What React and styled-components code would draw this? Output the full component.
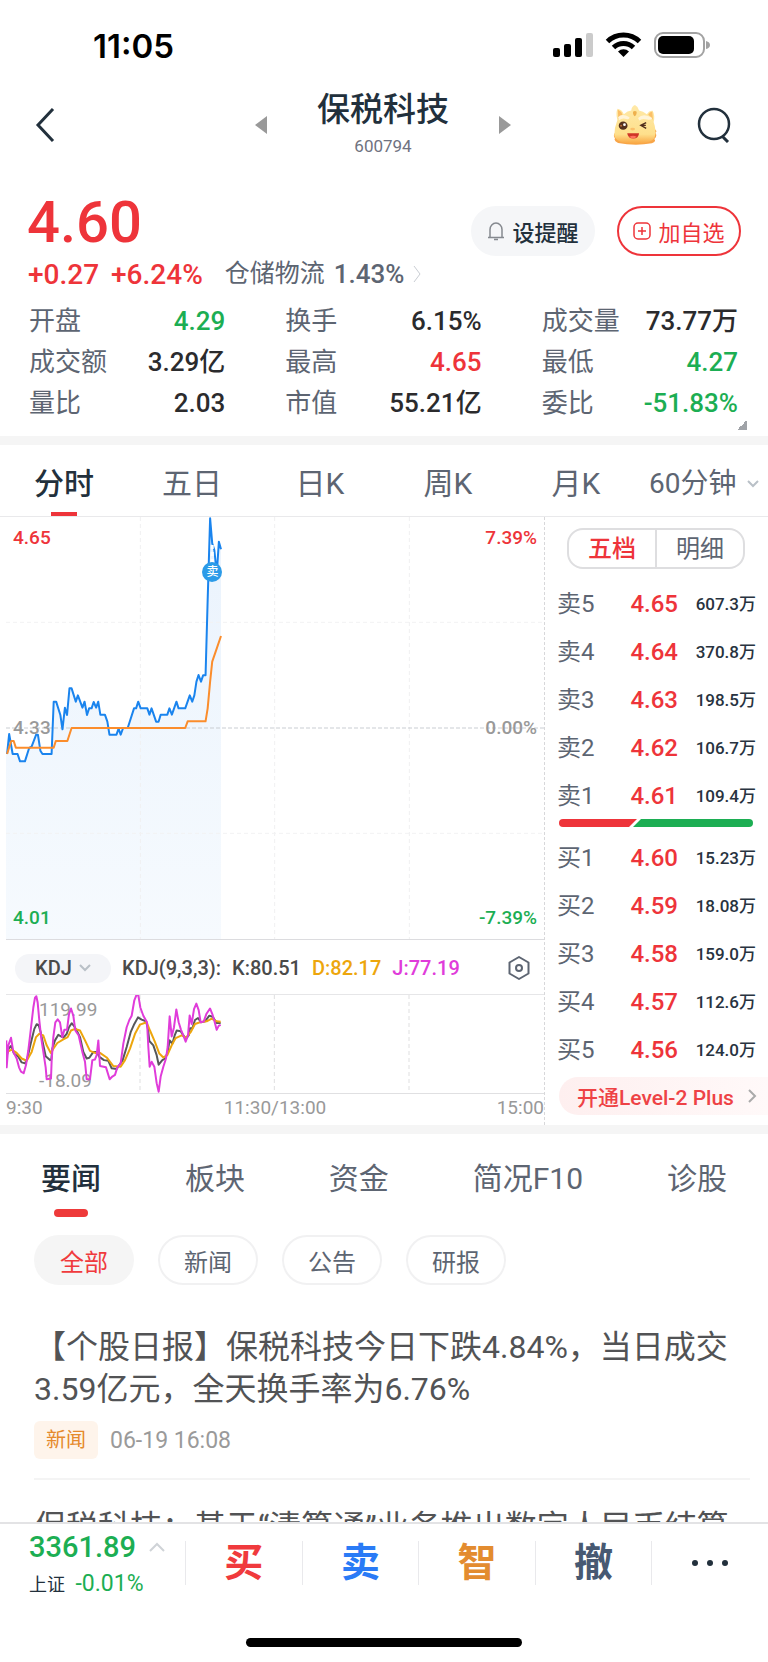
import { useState } from 'react'
import styled, { createGlobalStyle } from 'styled-components'

const RED = '#ee343a'
const GREEN = '#1cae53'
const INK = '#22303c'
const SLATE = '#5d6572'

const stats = [
    { label: '开盘', value: '4.29', color: GREEN },
    { label: '换手', value: '6.15%' },
    { label: '成交量', value: '73.77万' },
    { label: '成交额', value: '3.29亿' },
    { label: '最高', value: '4.65', color: RED },
    { label: '最低', value: '4.27', color: GREEN },
    { label: '量比', value: '2.03' },
    { label: '市值', value: '55.21亿' },
    { label: '委比', value: '-51.83%', color: GREEN },
]

const periods = ['分时', '五日', '日K', '周K', '月K']
const sections = ['要闻', '板块', '资金', '简况F10', '诊股']
const filters = ['全部', '新闻', '公告', '研报']

const asks = [
    ['卖5', '4.65', '607.3万'],
    ['卖4', '4.64', '370.8万'],
    ['卖3', '4.63', '198.5万'],
    ['卖2', '4.62', '106.7万'],
    ['卖1', '4.61', '109.4万'],
]
const bids = [
    ['买1', '4.60', '15.23万'],
    ['买2', '4.59', '18.08万'],
    ['买3', '4.58', '159.0万'],
    ['买4', '4.57', '112.6万'],
    ['买5', '4.56', '124.0万'],
]

const actions = [
    { label: '买', color: '#f03a3d' },
    { label: '卖', color: '#2a7bf6' },
    { label: '智', color: '#e38c2f' },
    { label: '撤', color: '#475972' },
]

const pricePoints = '20,942 26,882 36,942 50,942 57,964 71,964 83,924 90,920 103,884 108,884 115,932 121,942 147,942 153,785 160,785 172,825 178,868 185,803 191,825 198,745 204,745 216,785 222,766 235,803 241,785 248,825 254,805 261,805 267,786 274,803 280,785 286,824 299,824 306,845 312,884 332,884 338,866 344,884 351,864 364,864 382,805 388,805 394,785 401,805 420,805 426,824 432,805 445,845 452,845 458,824 477,824 483,805 490,824 503,785 509,805 528,805 541,766 548,785 554,766 560,725 566,705 573,725 579,706 586,706 592,480 599,235 605,310 611,330 618,400 624,305 630,328'
const averagePoints = '20,942 32,903 39,903 45,923 153,923 159,903 192,903 204,864 528,864 535,844 586,844 592,805 599,725 605,665 618,625 630,588'

const jPoints = '19,180 20,262 25,195 33,172 40,215 50,235 57,262 63,275 71,280 78,255 85,210 92,150 100,80 105,50 109,46 113,65 118,120 124,175 130,215 137,262 140,298 153,296 155,240 160,170 166,125 173,116 180,125 187,170 193,148 201,148 207,100 213,83 220,105 226,150 236,165 247,215 255,245 260,298 270,298 277,240 285,238 290,225 295,180 300,258 318,262 329,298 337,290 345,285 352,262 362,250 370,190 380,140 388,118 395,105 403,58 409,43 415,43 421,80 430,105 441,125 445,200 449,260 455,245 463,260 470,310 476,336 482,290 490,260 498,235 503,200 509,107 515,168 522,140 529,86 536,125 543,148 550,165 557,184 564,165 569,104 575,130 582,85 589,68 596,88 602,125 611,123 619,100 630,83 637,100 643,120 650,148 656,136 662,133'
const kPoints = '18,235 26,205 33,197 42,220 55,230 65,247 75,250 82,235 92,190 103,145 110,131 116,133 122,155 130,195 137,228 150,240 154,238 157,205 165,180 175,163 190,172 200,160 207,140 215,128 222,136 230,150 240,170 250,215 260,235 268,233 280,215 290,215 298,230 312,240 325,242 335,265 350,267 358,255 368,240 380,200 392,155 403,130 414,110 425,117 438,122 444,145 448,182 460,195 470,225 476,254 487,240 496,235 503,215 509,180 517,190 524,165 530,150 542,152 550,165 558,175 566,165 570,143 577,143 585,118 594,112 603,125 615,122 628,105 638,108 650,127 662,127'
const dPoints = '18,217 35,208 50,218 65,235 80,242 95,215 108,170 118,160 130,165 140,195 152,218 160,205 172,188 190,177 203,170 213,150 225,145 240,150 255,180 270,212 285,218 300,218 320,232 340,258 362,260 375,240 390,205 405,160 420,132 440,125 450,150 465,185 478,220 490,232 502,225 515,195 527,173 545,165 558,172 572,155 585,130 600,125 620,122 635,114 650,122 662,123'

const Chevron = ({ d, w, h, color = '#b9c0c7', stroke = 2 }) => (
    <svg width={w} height={h} viewBox={`0 0 ${w} ${h}`} fill='none' aria-hidden='true'>
        <path d={d} stroke={color} strokeWidth={stroke} />
    </svg>
)

const StatusIcons = () => (
    <svg width='157' height='28' viewBox='0 0 157 28' aria-hidden='true'>
        <rect x='0' y='16' width='7' height='9' rx='2' />
        <rect x='11' y='12' width='7' height='13' rx='2' />
        <rect x='22' y='6' width='7' height='19' rx='2' />
        <rect x='33' y='1' width='7' height='24' rx='2' fill='#cbcbcb' />
        <g fill='none' stroke='#000' strokeWidth='5'>
            <path d='M54.500 9.500a23 23 0 0 1 32 0' />
            <path d='M60.500 15.500a14.500 14.500 0 0 1 20 0' />
        </g>
        <path d='M70.500 25l-5.500-5.600a8 8 0 0 1 11 0z' />
        <rect x='102' y='1' width='49' height='24' rx='8' fill='none' stroke='#a2a2a2' strokeWidth='2' />
        <rect x='105' y='4' width='36' height='18' rx='5' />
        <path d='M153 9q4 1 4 4t-4 4z' fill='#a2a2a2' />
    </svg>
)

const DragonIcon = () => (
    <svg width='44' height='40' viewBox='0 0 128 118' aria-hidden='true'>
        <defs>
            <linearGradient id='dragon' x1='0' y1='0' x2='0' y2='1'>
                <stop offset='0' stopColor='#ffe9a8' />
                <stop offset='0.75' stopColor='#fee08c' />
                <stop offset='1' stopColor='#f9a440' />
            </linearGradient>
        </defs>
        <path d='M8 78Q-3 90 5 98Q0 106 14 112Q64 122 114 113Q128 108 121 100Q131 92 124 82Q132 76 120 70z' fill='#f8a548' />
        <path d='M12 44Q6 22 13 11Q26 14 31 27Q42 17 53 16Q54 4 64 0Q74 5 76 16Q88 18 99 27Q106 16 116 17Q124 32 119 50Q128 76 122 96Q112 114 64 115Q8 114 3 90Q3 66 12 44z' fill='url(#dragon)' />
        <path d='M13 13Q24 18 27 29Q19 32 15 43zM115 19Q107 20 103 29Q112 35 117 44z' fill='#fbbf67' />
        <path d='M58 20q6-4 11 0q0 12-7 13q-5-5-4-13z' fill='#eeb04d' />
        <path d='M14 36Q25 23 48 36Q47 45 38 41Q25 38 17 45z' fill='#fff4d8' />
        <path d='M73 38Q88 22 115 38Q112 46 100 43Q83 39 77 46z' fill='#fff4d8' />
        <ellipse cx='29' cy='61' rx='13' ry='12' fill='#54301d' />
        <circle cx='33' cy='58' r='4' fill='#fff' />
        <circle cx='23' cy='61' r='3' fill='#b96d38' />
        <path d='M97 52l-16 8l16 9M84 60h12' fill='none' stroke='#4f2e1c' strokeWidth='4' />
        <ellipse cx='57' cy='71' rx='7' ry='4' fill='#fbc06a' />
        <path d='M41 83h35q-1 15-17 16q-16-1-18-16z' fill='#cf3527' />
        <path d='M47 94q12-6 22 0q-10 9-22 0z' fill='#ff725d' />
    </svg>
)

// session quarters, shared by both panes
const QuarterLines = ({ xs, y1, y2, color }) =>
    xs.map((x) => (
        <line key={x} x1={x} x2={x} y1={y1} y2={y2} stroke={color} strokeDasharray='4 3' vectorEffect='non-scaling-stroke' />
    ))

const Line = ({ points, color }) => (
    <polyline points={points} fill='none' stroke={color} strokeWidth='2' strokeLinejoin='round' vectorEffect='non-scaling-stroke' />
)

const BookTable = ({ rows, caption }) => (
    <Levels aria-label={caption}>
        <tbody>
            {rows.map(([level, price, volume]) => (
                <tr key={level}>
                    <th scope='row'>{level}</th>
                    <td>{price}</td>
                    <td>{volume}</td>
                </tr>
            ))}
        </tbody>
    </Levels>
)

const Quote = () => (
    <Summary>
        <PriceRow>
            <Price>4.60</Price>
            <PillButton>
                <svg width='18' height='20' viewBox='0 0 18 20' fill='none' stroke='#85898f' strokeWidth='1.500' aria-hidden='true'>
                    <path d='M1 16.500h16M3 16V8.500a6 6.500 0 0 1 12 0V16M7 18.500h4' />
                </svg>
                设提醒
            </PillButton>
            <PillButton $outlined>
                <svg width='18' height='18' viewBox='0 0 18 18' fill='none' stroke={RED} strokeWidth='1.500' aria-hidden='true'>
                    <rect x='1' y='1' width='16' height='16' rx='4' />
                    <path d='M5 9h8M9 5v8' />
                </svg>
                加自选
            </PillButton>
        </PriceRow>
        <ChangeRow>
            <Change>+0.27</Change>
            <Change>+6.24%</Change>
            <Industry href='#industry'>
                仓储物流 <span>1.43%</span>
                <Chevron w={9} h={18} d='M1 1l6 8l-6 8' color='#c9cdd3' stroke={1} />
            </Industry>
        </ChangeRow>
        <Stats>
            {stats.map(({ label, value, color }) => (
                <Stat key={label} $color={color}>
                    <dt>{label}</dt>
                    <dd>{value}</dd>
                </Stat>
            ))}
        </Stats>
        <Expand aria-label='展开' />
    </Summary>
)

const Charts = () => (
    <ChartColumn>
        <PricePane>
            <svg viewBox='17 231 1534 1266' preserveAspectRatio='none' role='img' aria-label='分时走势'>
                <defs>
                    <linearGradient id='area' x1='0' y1='0' x2='0' y2='1'>
                        <stop offset='0' stopColor='#eaf3fd' />
                        <stop offset='1' stopColor='#f6fafe' />
                    </linearGradient>
                </defs>
                <polygon points={`17,1497 17,942 ${pricePoints} 630,1497`} fill='url(#area)' />
                <QuarterLines xs={[400, 783, 1167]} y1={231} y2={1497} color='#f0f0f1' />
                {[547, 1180].map((y) => (
                    <line key={y} x1='17' x2='1551' y1={y} y2={y} stroke='#f2f2f3' strokeDasharray='4 3' vectorEffect='non-scaling-stroke' />
                ))}
                <line x1='17' x2='1551' y1='864' y2='864' stroke='#c9cdd2' strokeDasharray='4 2' vectorEffect='non-scaling-stroke' />
                <Line points={pricePoints} color='#1a84ee' />
                <Line points={averagePoints} color='#fb8d2c' />
                <line x1='605' x2='605' y1='315' y2='366' stroke='#fff' strokeWidth='3' strokeDasharray='4 3' vectorEffect='non-scaling-stroke' />
            </svg>
            <SellMark>卖</SellMark>
            <Scale $color={RED}><span>4.65</span><span>7.39%</span></Scale>
            <Scale $color='#999'><span>4.33</span><span>0.00%</span></Scale>
            <Scale $color={GREEN}><span>4.01</span><span>-7.39%</span></Scale>
        </PricePane>
        <Legend>
            <IndicatorPick>
                <select aria-label='指标' defaultValue='KDJ'>
                    <option>KDJ</option>
                </select>
                <Chevron w={12} h={8} d='M1 1l5 5l5-5' />
            </IndicatorPick>
            <Reading $color='#4a4a4a'>KDJ(9,3,3):</Reading>
            <Reading $color='#4a4a4a'>K:80.51</Reading>
            <Reading $color='#eda60c'>D:82.17</Reading>
            <Reading $color='#e03cda'>J:77.19</Reading>
            <IconButton aria-label='指标设置'>
                <svg width='22' height='24' viewBox='0 0 22 24' fill='none' stroke='#5d6572' strokeWidth='2' strokeLinejoin='round'>
                    <path d='M11 1l9.500 5.500v11L11 23l-9.500-5.500v-11z' />
                    <circle cx='11' cy='12' r='3' />
                </svg>
            </IconButton>
        </Legend>
        <KdjPane>
            <svg viewBox='18 42 1614 298' preserveAspectRatio='none' role='img' aria-label='KDJ'>
                <QuarterLines xs={[420, 823, 1227]} y1={42} y2={340} color='#dfdfe0' />
            </svg>
            <Bounds><span>119.99</span><span>-18.09</span></Bounds>
            <svg viewBox='18 42 1614 298' preserveAspectRatio='none' aria-hidden='true'>
                <Line points={kPoints} color='#56585a' />
                <Line points={dPoints} color='#eda60c' />
                <Line points={jPoints} color='#e03cda' />
            </svg>
        </KdjPane>
        <Times><span>9:30</span><span>11:30/13:00</span><span>15:00</span></Times>
    </ChartColumn>
)

const OrderBook = () => {
    const [mode, setMode] = useState('五档')
    return (
        <Book>
            <Toggle>
                {['五档', '明细'].map((m) => (
                    <ToggleButton key={m} $active={m === mode} onClick={() => setMode(m)}>{m}</ToggleButton>
                ))}
            </Toggle>
            <BookTable rows={asks} caption='卖盘' />
            <Ratio viewBox='0 0 194 8' preserveAspectRatio='none' aria-hidden='true'>
                <path d='M4 0h74l-8 8H4a4 4 0 0 1 0-8z' fill={RED} />
                <path d='M82 0h108a4 4 0 0 1 0 8H74z' fill={GREEN} />
            </Ratio>
            <BookTable rows={bids} caption='买盘' />
            <LevelTwo href='#level2'>
                开通Level-2 Plus
                <Chevron w={9} h={14} d='M1 1l6 6l-6 6' color='#aaa' />
            </LevelTwo>
        </Book>
    )
}

const App = () => {
    const [period, setPeriod] = useState('分时')
    const [section, setSection] = useState('要闻')
    const [filter, setFilter] = useState('全部')

    return (
        <Screen>
            <GlobalStyle />
            <StatusBar>
                <Clock>11:05</Clock>
                <StatusIcons />
            </StatusBar>
            <Header>
                <HeaderSide>
                    <IconButton aria-label='返回'>
                        <Chevron w={20} h={34} d='M18 1L3 17l15 16' color={INK} stroke={3} />
                    </IconButton>
                </HeaderSide>
                <Switcher>
                    <IconButton aria-label='上一只'>
                        <svg width='12' height='18' viewBox='0 0 12 18'><path d='M12 0v18L0 9z' fill='#999' /></svg>
                    </IconButton>
                    <StockName>
                        <h1>保税科技</h1>
                        <p>600794</p>
                    </StockName>
                    <IconButton aria-label='下一只'>
                        <svg width='12' height='18' viewBox='0 0 12 18'><path d='M0 0v18l12-9z' fill='#999' /></svg>
                    </IconButton>
                </Switcher>
                <HeaderSide $end>
                    <IconButton aria-label='助手'><DragonIcon /></IconButton>
                    <IconButton aria-label='搜索'>
                        <svg width='34' height='36' viewBox='0 0 34 36' fill='none' stroke={INK} strokeWidth='2.500'>
                            <circle cx='17' cy='17' r='15' />
                            <path d='M25 29l6 6' strokeWidth='3' />
                        </svg>
                    </IconButton>
                </HeaderSide>
            </Header>

            <Quote />
            <Band />

            <PeriodTabs>
                {periods.map((p) => (
                    <PeriodTab key={p} $active={p === period} onClick={() => setPeriod(p)}>{p}</PeriodTab>
                ))}
                <MinutePick>
                    <select aria-label='分钟周期' defaultValue='60分钟'>
                        <option>60分钟</option>
                    </select>
                    <Chevron w={12} h={8} d='M1 1l5 5l5-5' />
                </MinutePick>
            </PeriodTabs>
            <Market>
                <Charts />
                <OrderBook />
            </Market>
            <Band />

            <SectionTabs>
                {sections.map((s) => (
                    <SectionTab key={s} $active={s === section} onClick={() => setSection(s)}>{s}</SectionTab>
                ))}
            </SectionTabs>
            <Filters>
                {filters.map((f) => (
                    <Filter key={f} $active={f === filter} onClick={() => setFilter(f)}>{f}</Filter>
                ))}
            </Filters>
            <Feed>
                <Article>
                    <h2>【个股日报】保税科技今日下跌4.84%，当日成交3.59亿元，全天换手率为6.76%</h2>
                    <Meta>
                        <Tag>新闻</Tag>
                        <time>06-19 16:08</time>
                    </Meta>
                </Article>
                <Article>
                    <h2>保税科技：基于“清算通”业务推出数字人民币结算</h2>
                </Article>
            </Feed>

            <Dock>
                <DockRow>
                    <Index>
                        <IndexValue>
                            3361.89
                            <Chevron w={16} h={10} d='M1 9l7-7l7 7' color='#cfd3d7' />
                        </IndexValue>
                        <IndexChange>上证 <span>-0.01%</span></IndexChange>
                    </Index>
                    {actions.map(({ label, color }) => (
                        <Action key={label} $color={color}>{label}</Action>
                    ))}
                    <Action aria-label='更多' $color={INK}>
                        <svg width='36' height='6' viewBox='0 0 36 6' fill={INK}>
                            <circle cx='3' cy='3' r='3' />
                            <circle cx='18' cy='3' r='3' />
                            <circle cx='33' cy='3' r='3' />
                        </svg>
                    </Action>
                </DockRow>
                <HomeIndicator />
            </Dock>
        </Screen>
    )
}

const GlobalStyle = createGlobalStyle`
    * {
        box-sizing: border-box;
    }
    body {
        margin: 0;
        background: #fff;
        color: ${INK};
        font-family: Roboto, 'Noto Sans CJK SC', sans-serif;
        font-weight: 500;
    }
    h1, h2, p, dl, dd {
        margin: 0;
        font-weight: inherit;
    }
    button, select {
        padding: 0;
        border: 0;
        background: none;
        color: inherit;
        font: inherit;
        cursor: pointer;
    }
    select {
        appearance: none;
    }
    a {
        color: inherit;
        text-decoration: none;
    }
    svg {
        display: block;
        flex: none;
    }
`

const Screen = styled.div`
    display: flex;
    flex-direction: column;
    height: 100vh;
    > * {
        flex: none;
    }
`

const StatusBar = styled.div`
    display: flex;
    align-items: center;
    justify-content: space-between;
    height: 90px;
    padding: 2px 58px 0 93px;
    color: #000;
`

const Clock = styled.span`
    font: 600 33px Inter, sans-serif;
`

const Header = styled.header`
    display: grid;
    grid-template-columns: 1fr auto 1fr;
    align-items: center;
    height: 64px;
    padding: 0 37px 0 35px;
`

const HeaderSide = styled.div`
    display: flex;
    align-items: center;
    gap: 40px;
    justify-content: ${({ $end }) => ($end ? 'flex-end' : 'flex-start')};
`

const Switcher = styled.div`
    display: flex;
    align-items: center;
    gap: 50px;
`

const StockName = styled.div`
    text-align: center;
    h1 {
        margin-bottom: 2px;
        font-size: 33px;
        line-height: 40px;
    }
    p {
        color: #6f7280;
        font-size: 17px;
        line-height: 28px;
        font-weight: 400;
    }
`

const IconButton = styled.button`
    display: flex;
`

const Summary = styled.section`
    padding: 32px 0 6px;
`

const PriceRow = styled.div`
    display: flex;
    align-items: center;
    gap: 22px;
    height: 72px;
    padding: 0 27px;
`

const Price = styled.strong`
    flex: 1;
    color: ${RED};
    font-size: 58px;
    line-height: 72px;
    font-weight: 500;
`

const PillButton = styled.button`
    display: flex;
    align-items: center;
    justify-content: center;
    gap: 7px;
    width: 124px;
    height: 50px;
    margin-top: 20px;
    border-radius: 25px;
    border: 2px solid ${({ $outlined }) => ($outlined ? RED : '#f5f6f8')};
    background: ${({ $outlined }) => ($outlined ? '#fff' : '#f5f6f8')};
    color: ${({ $outlined }) => ($outlined ? RED : INK)};
    font-size: 22px;
    font-weight: ${({ $outlined }) => ($outlined ? 400 : 500)};
    align-self: flex-start;
`

const ChangeRow = styled.div`
    display: flex;
    align-items: center;
    gap: 12px;
    height: 32px;
    padding: 0 28px;
`

const Change = styled.span`
    color: ${RED};
    font-size: 28px;
`

const Industry = styled.a`
    display: flex;
    align-items: center;
    gap: 9px;
    margin-left: 10px;
    color: ${SLATE};
    font-size: 25px;
    line-height: 32px;
    font-weight: 400;
    span {
        font-size: 26px;
        font-weight: 500;
    }
`

const Stats = styled.dl`
    display: grid;
    grid-template-columns: repeat(3, 1fr);
    column-gap: 60px;
    padding: 11px 30px 0 29px;
`

const Stat = styled.div`
    display: flex;
    justify-content: space-between;
    font-size: 26px;
    line-height: 41px;
    white-space: nowrap;
    dt {
        color: ${SLATE};
        font-weight: 400;
    }
    dd {
        color: ${({ $color }) => $color || '#2b2b2d'};
    }
`

const Expand = styled.button`
    display: block;
    width: 10px;
    height: 10px;
    margin: -4px 21px 0 auto;
    background: linear-gradient(135deg, transparent 50%, #a0a3a8 50%);
`

const Band = styled.div`
    height: 9px;
    background: #f5f5f5;
`

const PeriodTabs = styled.nav`
    display: grid;
    grid-template-columns: repeat(6, 1fr);
    height: 72px;
    border-bottom: 1px solid #e9e9eb;
`

const PeriodTab = styled.button`
    position: relative;
    color: ${({ $active }) => ($active ? INK : SLATE)};
    font-size: 30px;
    font-weight: ${({ $active }) => ($active ? 500 : 400)};
    &::after {
        content: '';
        display: ${({ $active }) => ($active ? 'block' : 'none')};
        position: absolute;
        left: 50%;
        bottom: 0;
        width: 26px;
        height: 4px;
        margin-left: -13px;
        background: ${RED};
    }
`

const MinutePick = styled.label`
    display: flex;
    align-items: center;
    justify-content: center;
    gap: 10px;
    padding-top: 6px;
    color: ${SLATE};
    font-size: 28px;
    font-weight: 400;
`

const Market = styled.section`
    display: flex;
    height: 608px;
`

const ChartColumn = styled.div`
    display: flex;
    flex-direction: column;
    flex: 1;
    min-width: 0;
    margin-left: 6px;
    border-right: 1px dashed #d8d8da;
`

const PricePane = styled.div`
    position: relative;
    display: flex;
    flex-direction: column;
    justify-content: space-between;
    height: 423px;
    padding: 10px 7px;
    border-bottom: 1px solid #dcdcdf;
    > svg {
        position: absolute;
        inset: 0;
        width: 100%;
        height: 100%;
    }
`

const Scale = styled.div`
    position: relative;
    display: flex;
    justify-content: space-between;
    color: ${({ $color }) => $color};
    font-size: 19px;
    line-height: 22px;
`

const SellMark = styled.span`
    position: absolute;
    left: 38%;
    top: 13%;
    width: 20px;
    height: 20px;
    margin: -10px 0 0 -8px;
    border-radius: 50%;
    background: #2c9be8;
    color: #fff;
    font-size: 12px;
    line-height: 20px;
    text-align: center;
`

const Legend = styled.div`
    display: flex;
    align-items: center;
    gap: 11px;
    height: 54px;
    padding: 2px 14px 0 9px;
    button {
        margin-left: auto;
    }
`

const IndicatorPick = styled.label`
    display: flex;
    align-items: center;
    justify-content: center;
    gap: 7px;
    width: 96px;
    height: 29px;
    border-radius: 15px;
    background: #f4f5f8;
    color: #4a4a4a;
    font-size: 20px;
`

const Reading = styled.span`
    color: ${({ $color }) => $color};
    font-size: 20px;
`

const KdjPane = styled.div`
    position: relative;
    height: 100px;
    border-top: 1px solid #e6e6e8;
    border-bottom: 1px solid #e0e0e2;
    > svg {
        position: absolute;
        inset: 0;
        width: 100%;
        height: 100%;
    }
`

const Bounds = styled.div`
    display: flex;
    flex-direction: column;
    justify-content: space-between;
    height: 100%;
    padding: 4px 0 1px 33px;
    color: #999;
    font-size: 19px;
    line-height: 22px;
    font-weight: 400;
`

const Times = styled.div`
    display: grid;
    grid-template-columns: 1fr auto 1fr;
    padding-top: 3px;
    color: #999;
    font-size: 19px;
    line-height: 22px;
    font-weight: 400;
    span:last-child {
        text-align: right;
    }
`

const Book = styled.aside`
    width: 223px;
    padding: 11px 12px 0;
    overflow: hidden;
`

const Toggle = styled.div`
    display: flex;
    margin: 0 11px 11px 10px;
    border: 2px solid #dedee0;
    border-radius: 16px;
`

const ToggleButton = styled.button`
    flex: 1;
    height: 37px;
    padding-top: 2px;
    color: ${({ $active }) => ($active ? RED : SLATE)};
    font-size: 24px;
    line-height: 35px;
    font-weight: ${({ $active }) => ($active ? 500 : 400)};
    & + & {
        border-left: 2px solid #dedee0;
    }
`

const Levels = styled.table`
    width: 100%;
    border-collapse: collapse;
    tr {
        height: 48px;
    }
    th, td {
        padding: 0;
        font-size: 24px;
        line-height: 32px;
        font-weight: 500;
        text-align: right;
    }
    th {
        color: ${SLATE};
        text-align: left;
        font-weight: 400;
    }
    td {
        color: ${RED};
    }
    td:last-child {
        width: 78px;
        color: #283340;
        font-size: 17px;
    }
`

const Ratio = styled.svg`
    width: calc(100% - 5px);
    height: 8px;
    margin: -1px 0 7px 2px;
`

const LevelTwo = styled.a`
    display: flex;
    align-items: center;
    gap: 14px;
    height: 38px;
    margin: 3px -12px 0 2px;
    padding-left: 18px;
    border-radius: 19px 0 0 19px;
    background: linear-gradient(90deg, #feefef, #fff9f9);
    color: #ee4245;
    font-size: 21px;
    white-space: nowrap;
`

const SectionTabs = styled.nav`
    display: flex;
    justify-content: space-between;
    height: 83px;
    padding: 0 41px;
`

const SectionTab = styled.button`
    position: relative;
    color: ${({ $active }) => ($active ? INK : SLATE)};
    font-size: 30px;
    font-weight: ${({ $active }) => ($active ? 500 : 400)};
    &::after {
        content: '';
        display: ${({ $active }) => ($active ? 'block' : 'none')};
        position: absolute;
        left: 50%;
        bottom: 0;
        width: 34px;
        height: 8px;
        margin-left: -17px;
        border-radius: 4px;
        background: #ee3a3a;
    }
`

const Filters = styled.div`
    display: flex;
    gap: 24px;
    padding: 18px 34px 0;
`

const Filter = styled.button`
    width: 100px;
    height: 50px;
    border: 2px solid ${({ $active }) => ($active ? '#f5f5f5' : '#f1f1f2')};
    border-radius: 25px;
    background: ${({ $active }) => ($active ? '#f5f5f5' : '#fff')};
    color: ${({ $active }) => ($active ? '#f03a3d' : SLATE)};
    font-size: 24px;
    font-weight: 400;
`

const Feed = styled.main`
    flex: 1;
    min-height: 0;
    padding: 15px 18px 0 34px;
    overflow: hidden;
`

const Article = styled.article`
    padding: 26px 0 19px;
    border-bottom: 2px solid #f4f4f4;
    h2 {
        color: #525355;
        font-size: 32px;
        line-height: 42px;
        font-weight: 400;
    }
`

const Meta = styled.div`
    display: flex;
    align-items: center;
    gap: 12px;
    margin-top: 11px;
    color: #9a9a9a;
    font-size: 23px;
    font-weight: 400;
`

const Tag = styled.span`
    padding: 0 12px;
    border-radius: 6px;
    background: #fef4eb;
    color: #e58a2c;
    font-size: 20px;
    line-height: 38px;
`

const Dock = styled.footer`
    height: 140px;
    border-top: 2px solid #e3e3e5;
    background: #fff;
    display: flex;
    flex-direction: column;
    justify-content: space-between;
    align-items: center;
    padding-bottom: 15px;
`

const DockRow = styled.div`
    display: flex;
    align-items: center;
    width: 100%;
    height: 78px;
`

const Index = styled.div`
    width: 185px;
    padding: 3px 0 0 29px;
`

const IndexValue = styled.p`
    display: flex;
    align-items: center;
    gap: 13px;
    color: ${GREEN};
    font-size: 29px;
    line-height: 40px;
`

const IndexChange = styled.p`
    font-size: 18px;
    line-height: 34px;
    white-space: nowrap;
    font-weight: 400;
    span {
        margin-left: 6px;
        color: ${GREEN};
        font-size: 23px;
    }
`

const Action = styled.button`
    display: flex;
    align-items: center;
    justify-content: center;
    flex: 1;
    height: 44px;
    border-left: 1px solid #e9e9ec;
    color: ${({ $color }) => $color};
    font-size: 39px;
    line-height: 44px;
    font-weight: 700;
`

const HomeIndicator = styled.div`
    width: 36%;
    height: 9px;
    border-radius: 5px;
    background: #000;
`

export default App
